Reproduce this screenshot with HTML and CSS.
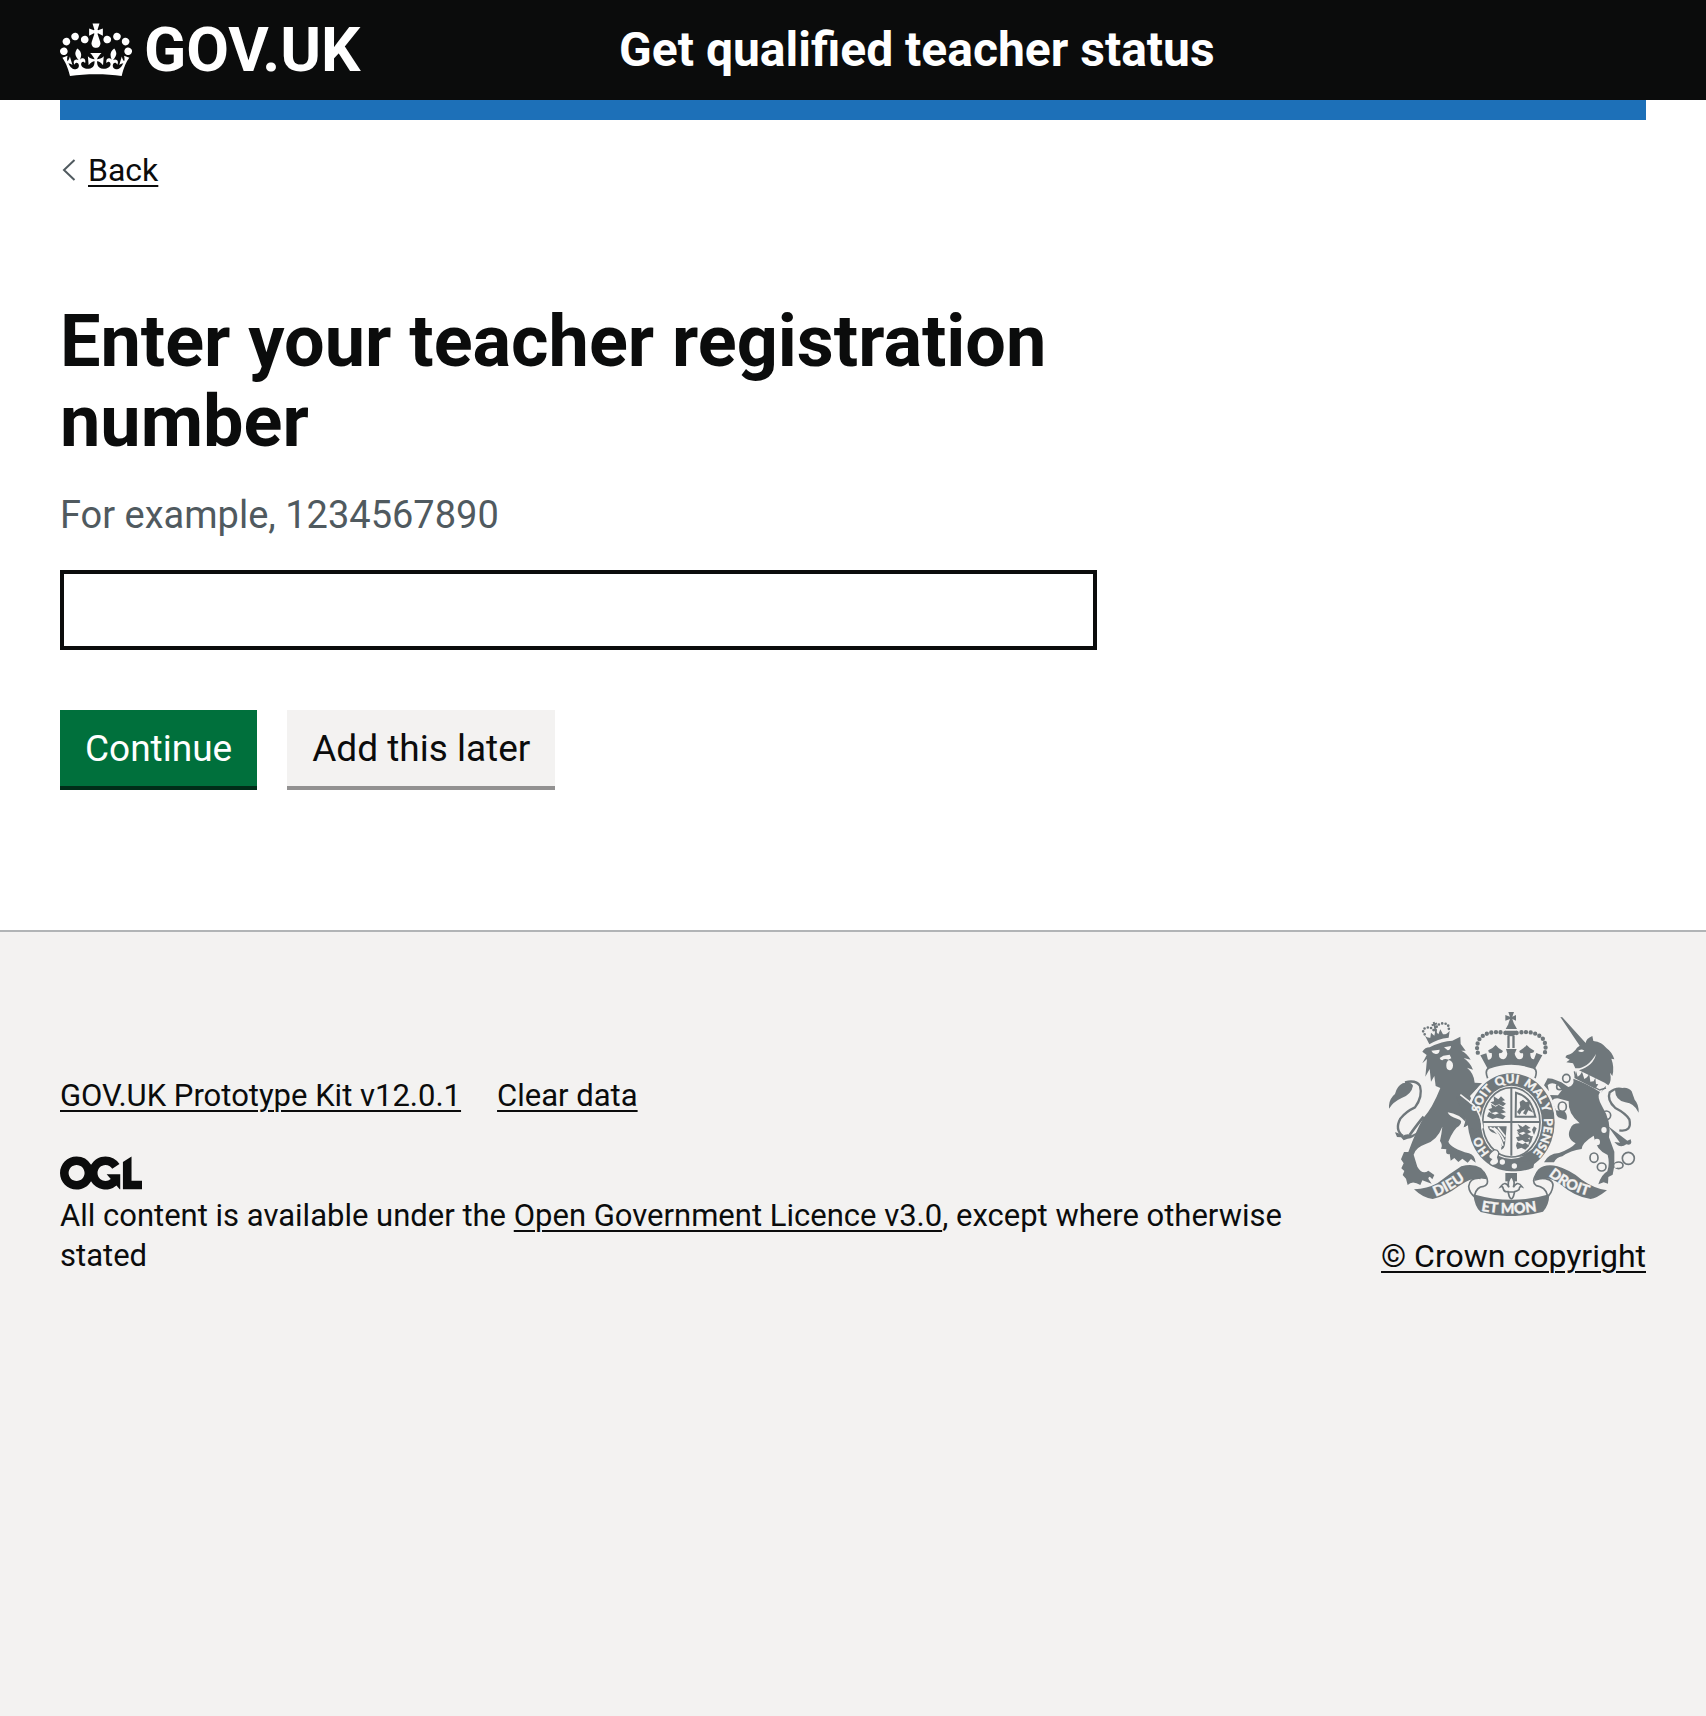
FILE: index.html
```html
<!DOCTYPE html>
<html lang="en">
<head>
<meta charset="utf-8">
<meta name="viewport" content="width=device-width, initial-scale=1">
<title>Enter your teacher registration number - Get qualified teacher status</title>
<link rel="stylesheet" href="styles.css">
</head>
<body>
<header class="header">
  <div class="container header-row">
    <a class="logo" href="#">
      <svg class="logo-crown" viewBox="0 0 132 97" aria-hidden="true"><path fill="currentColor" fill-rule="evenodd" d="M25 30.2c3.5 1.5 7.7-.2 9.1-3.7 1.5-3.6-.2-7.8-3.9-9.2-3.6-1.4-7.6.3-9.1 3.9-1.4 3.5.3 7.5 3.9 9zM9 39.5c3.6 1.5 7.8-.2 9.2-3.7 1.5-3.6-.2-7.8-3.9-9.1-3.6-1.5-7.6.2-9.1 3.8-1.4 3.5.3 7.5 3.8 9zM4.4 57.2c3.5 1.5 7.7-.2 9.1-3.8 1.5-3.6-.2-7.7-3.9-9.1-3.5-1.5-7.6.3-9.1 3.8-1.4 3.5.3 7.6 3.9 9.1zm38.3-21.4c3.5 1.5 7.7-.2 9.1-3.8 1.5-3.6-.2-7.7-3.9-9.1-3.6-1.5-7.6.3-9.1 3.8-1.3 3.6.4 7.7 3.9 9.1zm64.4-5.6c-3.6 1.5-7.8-.2-9.1-3.7-1.5-3.6.2-7.8 3.8-9.2 3.6-1.4 7.7.3 9.2 3.9 1.3 3.5-.4 7.5-3.9 9zm15.9 9.3c-3.6 1.5-7.7-.2-9.1-3.7-1.5-3.6.2-7.8 3.7-9.1 3.6-1.5 7.7.2 9.2 3.8 1.5 3.5-.3 7.5-3.8 9zm4.7 17.7c-3.6 1.5-7.8-.2-9.2-3.8-1.5-3.6.2-7.7 3.9-9.1 3.6-1.5 7.7.3 9.2 3.8 1.3 3.5-.4 7.6-3.9 9.1zM89.3 35.8c-3.6 1.5-7.8-.2-9.2-3.8-1.4-3.6.2-7.7 3.9-9.1 3.6-1.5 7.7.3 9.2 3.8 1.4 3.6-.3 7.7-3.9 9.1zM69.7 17.7l8.9 4.7V9.3l-8.9 2.8c-.2-.3-.5-.6-.9-.9L72.4 0H59.6l3.5 11.2c-.3.3-.6.5-.9.9l-8.8-2.8v13.1l8.8-4.7c.3.3.6.7.9.9l-5 15.4v.1c-.2.8-.4 1.6-.4 2.4 0 4.1 3.1 7.5 7 8.1h.2c.3 0 .7.1 1 .1.4 0 .7 0 1-.1h.2c4-.6 7.1-4.1 7.1-8.1 0-.8-.1-1.7-.4-2.4V34l-5.1-15.4c.4-.2.7-.6 1-.9zM66 92.8c16.9 0 32.8 1.1 47.1 3.2 4-16.9 8.9-26.7 14-33.5l-9.6-3.4c1 4.9 1.1 7.2 0 10.2-1.5-1.4-3-4.3-4.2-8.7L108.6 76c2.8-2 5-3.2 7.5-3.3-4.4 9.4-10 11.9-13.6 11.2-4.3-.8-6.3-4.6-5.6-7.9 1-4.7 5.7-5.9 8-.5 4.3-8.7-3-11.4-7.6-8.8 7.1-7.2 7.9-13.5 2.1-21.1-8 6.1-8.1 12.3-4.5 20.8-4.7-5.4-12.1-2.5-9.5 6.2 3.4-5.2 7.9-2 7.2 3.1-.6 4.3-6.4 7.8-13.5 7.2-10.3-.9-10.9-8-11.2-13.8 2.5-.5 7.1 1.8 11 7.3L80.2 60c-4.1 4.4-8 5.3-12.3 5.4 1.4-4.4 8-11.6 8-11.6H55.5s6.4 7.2 7.9 11.6c-4.2-.1-8-1-12.3-5.4l1.4 16.4c3.9-5.5 8.5-7.7 10.9-7.3-.3 5.8-.9 12.8-11.1 13.8-7.2.6-12.9-2.9-13.5-7.2-.7-5 3.8-8.3 7.1-3.1 2.7-8.7-4.6-11.6-9.4-6.2 3.7-8.5 3.6-14.7-4.6-20.8-5.8 7.6-5 13.9 2.2 21.1-4.7-2.6-11.9.1-7.7 8.8 2.3-5.5 7.1-4.2 8.1.5.7 3.3-1.3 7.1-5.7 7.9-3.5.7-9-1.8-13.5-11.2 2.5.1 4.7 1.3 7.5 3.3l-4.7-15.4c-1.2 4.4-2.7 7.2-4.3 8.7-1.1-3-.9-5.3 0-10.2l-9.5 3.4c5 6.9 9.9 16.7 14 33.5 14.8-2.1 30.8-3.2 47.7-3.2z"/></svg>
      <span>GOV.UK</span>
    </a>
    <a class="service" href="#">Get qualified teacher status</a>
  </div>
</header>
<div class="container">
  <div class="header-bar"></div>
  <a class="back" href="#">
    <svg class="back-arrow" viewBox="0 0 14 22" aria-hidden="true"><path d="M12.500 1 2 11l10.500 10" fill="none" stroke="currentColor" stroke-width="2"/></svg>
    <span class="back-text">Back</span>
  </a>
  <main class="main">
    <form class="form">
      <h1 class="title"><label for="trn">Enter your teacher registration number</label></h1>
      <div class="hint" id="trn-hint">For example, 1234567890</div>
      <input class="input" id="trn" name="trn" type="text" aria-describedby="trn-hint">
      <div class="buttons">
        <button class="button" type="button">Continue</button>
        <button class="button button-secondary" type="button">Add this later</button>
      </div>
    </form>
  </main>
</div>
<footer class="footer">
  <div class="container footer-row">
    <div class="footer-meta">
      <ul class="footer-links">
        <li><a href="#">GOV.UK Prototype Kit v12.0.1</a></li>
        <li><a href="#">Clear data</a></li>
      </ul>
      <svg class="ogl" viewBox="0 0 483.2 195.7" aria-hidden="true"><path fill="currentColor" d="M421.5 142.8V.1l-50.7 32.3v161.1h112.4v-50.7zm-122.3-9.6A47.12 47.12 0 0 1 221 97.8c0-26 21.1-47.1 47.1-47.1 16.7 0 31.4 8.7 39.7 21.8l42.7-27.2A97.63 97.63 0 0 0 268.1 0c-36.5 0-68.3 20.1-85.1 49.7A98 98 0 0 0 97.8 0C43.9 0 0 43.9 0 97.8s43.9 97.8 97.8 97.8c36.5 0 68.3-20.1 85.1-49.7a97.76 97.76 0 0 0 149.6 25.4l19.4 22.2h3v-87.8h-80l24.3 27.5zM97.8 145c-26 0-47.1-21.1-47.1-47.1s21.1-47.1 47.1-47.1 47.1 21.1 47.1 47.1S123.800 145 97.800 145"/></svg>
      <p class="licence">All content is available under the <a href="#">Open Government Licence v3.0</a>, except where otherwise stated</p>
    </div>
    <a class="copyright" href="#">
      <svg class="crest" viewBox="60 36 750 612" aria-hidden="true">
        <defs>
          <path id="garter" d="M427 487C370 487 329 430 329 367S370 249 427 249S525 304 525 367S484 487 427 487"/>
          <path id="dieu" d="M200 590Q250 570 305 528"/>
          <path id="droit" d="M538 526Q590 570 660 588"/>
          <path id="etmon" d="M336 632Q427 650 520 630"/>
        </defs>
        <g fill="currentColor">
          <!-- lion crown -->
          <path d="M181 133Q205 116 239 113L242 92Q234 104 222 103L214 88L208 103L199 92L196 107L186 98L184 113Q176 115 168 107Z"/>
          <path d="M188 76l16-6M194 66l5 19M198 82l3 16" stroke="currentColor" stroke-width="6" fill="none"/>
          <path d="M167 103Q155 87 174 83Q188 80 196 94M200 90Q202 72 221 70Q245 70 238 95" fill="none" stroke="currentColor" stroke-width="8" stroke-dasharray="0 10" stroke-linecap="round"/>
          <!-- lion -->
          <path d="M160 155Q168 142 182 142Q220 122 250 122L274 110L275 132L290 152L277 152Q294 160 305 179L284 174Q304 188 312 209L294 203Q315 220 317 248L345 250L320 270L303 288Q312 310 335 350L345 398L330 388L320 397L312 385L300 394L298 376L284 382L290 366Q270 342 236 337Q240 349 266 357Q285 362 270 378Q255 385 238 425Q246 445 300 460Q318 466 320 488L306 477L296 488L280 476L268 486L256 474L245 482L242 462Q228 466 232 448L216 446Q222 435 213 423Q218 400 220 380Q205 420 170 432Q140 442 134 464L145 500Q160 526 178 512L196 525L190 538Q180 524 178 536L188 551L160 541L154 555Q130 540 116 555L111 536L101 525L106 513L97 505L104 490L96 478L105 456L118 456Q142 390 163 354Q190 325 214 264L200 258L196 228L186 245L182 207L169 230L174 177L160 190L173 165Z"/>
          <path d="M102 408Q76 390 94 356Q110 335 138 322Q162 290 153 258Q142 239 108 247" fill="none" stroke="currentColor" stroke-width="7"/>
          <path d="M60 326Q58 298 78 282Q84 258 101 250Q125 242 132 257Q128 282 98 294Q72 306 60 326ZM78 397Q92 399 99 409Q115 398 127 406L146 397Q134 416 116 416L104 421L96 412L84 411Z"/>
          <path d="M122 405Q147 370 164 350" fill="none" stroke="currentColor" stroke-width="8"/>
          <!-- central crown -->
          <path d="M418 36h17l-5 14 11-5v17l-11-5 5 14h-17l5-14-14 5V45l14 5zM420 69h14l10 18h-34zM407 92h38q-3 17-19 17t-19-17z"/>
          <path d="M415 108h7v36h-7zM430 108h7v36h-7z"/>
          <path d="M409 99Q354 88 330 119Q318 145 331 169M443 99Q498 88 524 119Q536 145 523 169" fill="none" stroke="currentColor" stroke-width="13" stroke-linecap="round" stroke-dasharray="0 14"/>
          <path d="M334 166l18-6 5 19q15 0 11-20-11 2-10-8 16-8 22-16 7 10 22 18-2 8-12 7-2 18 14 18 10-5 11-17l-4-14h32l-6 14q4 16 14 17 14-1 11-18-11 1-11-7 15-8 22-18 7 9 23 17-2 9-12 7-1 18 11 19l7-19 18 7-22 40q-71-28-142 0z"/>
          <path d="M360 204Q427 180 494 204Q507 210 498 235M360 204Q346 210 356 235" fill="none" stroke="currentColor" stroke-width="5"/>
          <!-- unicorn -->
          <path d="M574 51L580 52L650 129Q651 116 670 108L673 123Q699 126 713 145Q728 155 736 178L727 176Q737 202 730 228L723 218Q729 244 718 256L707 248L630 211Q674 197 681 162Q655 207 619 205L612 190L592 187L602 179L589 172L593 166Q614 160 624 143L632 137Z"/>
          <path d="M613 236Q651 249 693 276Q682 290 700 320Q728 364 720 412L736 455V498L731 524L718 531L717 551L704 547L688 553Q697 524 715 514Q723 490 716 465Q680 449 674 407Q638 429 638 447Q605 451 580 469Q562 472 555 487H525Q537 461 570 459Q607 446 620 430Q590 414 604 386Q610 369 632 370Q596 340 599 304L574 297Q560 291 548 302L540 285L567 286L579 270L566 255Q548 245 536 255L540 274L525 256L536 235L550 236L577 247L598 261Q617 256 613 236Z"/>
          <path d="M548 301Q556 319 561 331L587 334Q597 348 592 360L568 352L548 330L535 340L523 335L541 324L530 305Z"/>
          <path d="M616 214L619 230L692 270L711 264" fill="none" stroke="currentColor" stroke-width="4"/>
          <path d="M621 213l5 17 7-5 6-10 7 22 8-5 7-10 3 23 10-1 5-11 2 19 7 1-9 13-63-32zM709 259l-14 20 16-19z"/>
          <path d="M751 391Q790 397 781 358Q770 340 739 324Q713 300 722 277Q742 261 762 268" fill="none" stroke="currentColor" stroke-width="7"/>
          <path d="M738 270Q774 254 788 274L797 299Q810 313 809 338Q796 310 769 307Q739 301 738 270ZM716 377L775 422 785 418Q792 438 772 433Q753 447 736 426L753 428Z"/>
          <g fill="none" stroke="currentColor" stroke-width="5"><ellipse cx="592" cy="235" rx="11" ry="12"/><circle cx="572" cy="260" r="9"/><ellipse cx="580" cy="320" rx="12" ry="14"/><circle cx="712" cy="346" r="13"/><ellipse cx="675" cy="473" rx="12" ry="14"/><ellipse cx="698" cy="501" rx="13" ry="12"/><ellipse cx="749" cy="496" rx="13" ry="10"/><circle cx="778" cy="475" r="18"/></g>
          <!-- garter and shield -->
          <ellipse cx="427" cy="367" rx="137" ry="154" class="crest-ground"/>
          <ellipse cx="427" cy="367" rx="130" ry="147"/>
          <ellipse cx="427" cy="367" rx="92" ry="110" class="crest-ground"/>
          <ellipse cx="427" cy="367" rx="86" ry="104" fill="none" stroke="currentColor" stroke-width="5"/>
          <path d="M427 263v204M341 366h172" stroke="currentColor" stroke-width="6"/>
          <path d="M374 289l14 9 8-9 12 12-9 2 12 8-9 8-12-6-11 4-15-10 11-3zM366 312l14 8 9-6 19 11-9 3 12 9-18 4-12-6-13 4-10-11 11-4zM360 336l18 8 13-5 19 10-8 9-19-5-13 4-16-8zM446 372l15 9 9-7 15 10-10 3 12 9-13 6-11-7-13 5-7-10 10-4zM444 397l16 8 10-6 20 11-13 5 10 9-18 3-9-7-13 4-6-12 11-3zM444 426l17 7 8-5 12 9-12 12-12-6-12 5-4-11z"/>
          <path d="M441 278Q487 289 499 350H440Z" fill="none" stroke="currentColor" stroke-width="6"/>
          <path d="M452 306l10-7 9 8 13-6-3 18 12 19-15-7-7 14-9-5 7-12-11 5-6 11-8-8 10-15z"/>
          <path d="M356 379h57l-5 54Q406 447 396 449Q404 407 376 399Q361 397 356 379ZM489 389l6-10 8 6-8 20zM477 440l10-15 5-17-9 3zM450 470q26 1 48-25"/>
          <path d="M362 383Q387 389 402 437M374 383Q395 397 406 424M387 382L409 410M360 395L397 441" class="crest-line"/>
          <path d="M355 456Q421 500 498 478L493 503Q427 530 367 491L378 480 360 475 373 470Z"/>
          <path d="M376 449Q396 451 386 472Q397 494 370 497Q354 490 367 478Q347 470 376 449Z" class="crest-ground" stroke="currentColor" stroke-width="4"/>
          <circle cx="400" cy="486" r="8" class="crest-ground"/><circle cx="436" cy="498" r="8" class="crest-ground"/>
          <!-- lion's arm over the garter -->
          <path d="M262 290L314 315Q334 345 337 394L330 387 320 396 311 385 300 394 297 376 284 382 290 360Z"/>
          <path d="M274 284L314 315Q336 342 341 385" class="crest-line"/>
          <!-- fleur-de-lis and scroll -->
          <path d="M409 519h35v25h-35z"/>
          <path d="M427 529Q440 545 433 562Q446 540 459 560Q452 557 450 569Q443 574 437 575L433 590Q427 603 421 590L417 575Q405 577 403 567Q401 557 395 560Q408 540 420 562Q413 545 427 529ZM415 576h24" class="crest-ground" stroke="currentColor" stroke-width="5"/>
          <path d="M135 568Q174 567 206 549Q244 520 277 499Q312 489 336 504Q353 520 353 538L330 535Q304 535 271 557Q228 589 191 597Q163 595 135 568ZM714 571Q675 565 638 539Q604 510 565 499Q529 490 508 508Q496 521 496 543L523 536Q549 533 574 553Q619 592 665 597Q682 596 714 571ZM313 583Q430 616 541 583Q540 617 522 635Q427 661 335 636Q317 621 313 583Z"/>
          <path d="M335 535Q302 532 299 559Q300 580 322 595M344 516Q367 551 344 559Q323 560 317 585M514 535Q551 535 552 555Q550 579 532 594M506 517Q484 545 502 557Q529 561 535 585" fill="none" stroke="currentColor" stroke-width="5"/>
        </g>
        <!-- lion and unicorn faces and spots -->
        <g class="crest-ground">
          <path d="M187 152l25-3q-1 14-12 13-10-2-13-10zM225 142l21-4q-1 12-10 13zM212 174l11-7 19-3 5 11-10 4q16 4 15 18-1 13-10 14-11-2-10-16 0-11 8-15-13-6-20 1-6 0-8-7zM627 153q9-9 19-1-8 8-19 1z"/>
          <ellipse cx="705" cy="390" rx="8" ry="9"/><ellipse cx="684" cy="426" rx="9" ry="10"/><ellipse cx="741" cy="497" rx="5" ry="7"/>
        </g>
        <g class="crest-motto">
          <text><textPath href="#garter" startOffset="73">HO</textPath></text>
          <text><textPath href="#garter" startOffset="200">SOIT</textPath></text>
          <text><textPath href="#garter" startOffset="296">QUI</textPath></text>
          <text><textPath href="#garter" startOffset="378">MAL</textPath></text>
          <text><textPath href="#garter" startOffset="458">Y</textPath></text>
          <text><textPath href="#garter" startOffset="500">PENSE</textPath></text>
        </g>
        <g class="crest-motto crest-scroll">
          <text><textPath href="#dieu">DIEU</textPath></text>
          <text><textPath href="#etmon">ET MON</textPath></text>
          <text><textPath href="#droit">DROIT</textPath></text>
        </g>
      </svg>
      <span class="copyright-text">© Crown copyright</span>
    </a>
  </div>
</footer>
</body>
</html>
```
FILE: styles.css
```css
* { box-sizing: border-box; }
html { background: #f3f2f1; }
body {
  margin: 0;
  background: #fff;
  color: #0b0c0c;
  font-family: Roboto, "Liberation Sans", sans-serif;
  font-size: 32px;
  line-height: 40px;
}
a { color: inherit; text-decoration-thickness: 2px; text-underline-offset: 4px; }
.container { padding: 0 60px; }

.header { background: #0b0c0c; color: #fff; }
.header-row { display: flex; align-items: center; gap: 4px; height: 100px; }
.header a { text-decoration: none; font-weight: 700; }
.logo { flex: 0 0 35%; display: flex; align-items: center; gap: 12px; font-size: 62px; line-height: 62px; }
.logo-crown { width: 72px; height: 54px; }
.service { font-size: 48px; line-height: 60px; }
.header-bar { height: 20px; background: #1d70b8; }

.back { display: inline-flex; align-items: center; gap: 12px; margin: 30px 0 0 2px; text-decoration: none; }
.back-arrow { width: 14px; height: 22px; color: #505a5f; }
.back-text { text-decoration: underline; text-decoration-thickness: 2px; text-underline-offset: 4px; }

.main { padding: 112px 0 140px; }
.form { width: 66%; max-width: 1037px; }
.title { margin: 0 0 28px; font-size: 72px; line-height: 80px; font-weight: 700; }
.hint { margin-bottom: 30px; color: #505a5f; font-size: 38px; line-height: 50px; }
.input { display: block; width: 100%; height: 80px; padding: 10px; border: 4px solid #0b0c0c; border-radius: 0; background: #fff; font: inherit; }
.buttons { display: flex; gap: 30px; margin-top: 60px; }
.button {
  padding: 20px 25px 18px;
  border: 0;
  border-bottom: 4px solid #002d18;
  background: #00703c;
  color: #fff;
  font-family: inherit;
  font-size: 37px;
  line-height: 38px;
}
.button-secondary { background: #f3f2f1; border-bottom-color: #929191; color: #0b0c0c; }

.footer { padding: 80px 0 60px; border-top: 2px solid #b1b4b6; background: #f3f2f1; }
.footer-row { display: flex; align-items: flex-end; justify-content: space-between; gap: 60px; }
.footer-meta { flex: 1; font-size: 31px; }
.footer-links { display: flex; gap: 36px; margin: 0 0 40px; padding: 0; list-style: none; }
.ogl { display: block; width: 82px; height: 34px; }
.licence { margin: 6px 0 0; }
.copyright { display: flex; flex-direction: column; align-items: center; gap: 20px; text-decoration: none; }
.copyright-text { text-decoration: underline; text-decoration-thickness: 2px; text-underline-offset: 4px; }
.crest { width: 250px; height: 204px; color: #6f777b; }
.crest-ground { fill: #f3f2f1; }
.crest-line { fill: none; stroke: #f3f2f1; stroke-width: 5px; }
.crest-motto { fill: #f3f2f1; stroke: #f3f2f1; stroke-width: 1px; font-family: Lato, sans-serif; font-size: 36px; font-weight: 900; }
.crest-scroll { font-size: 43px; }
```
